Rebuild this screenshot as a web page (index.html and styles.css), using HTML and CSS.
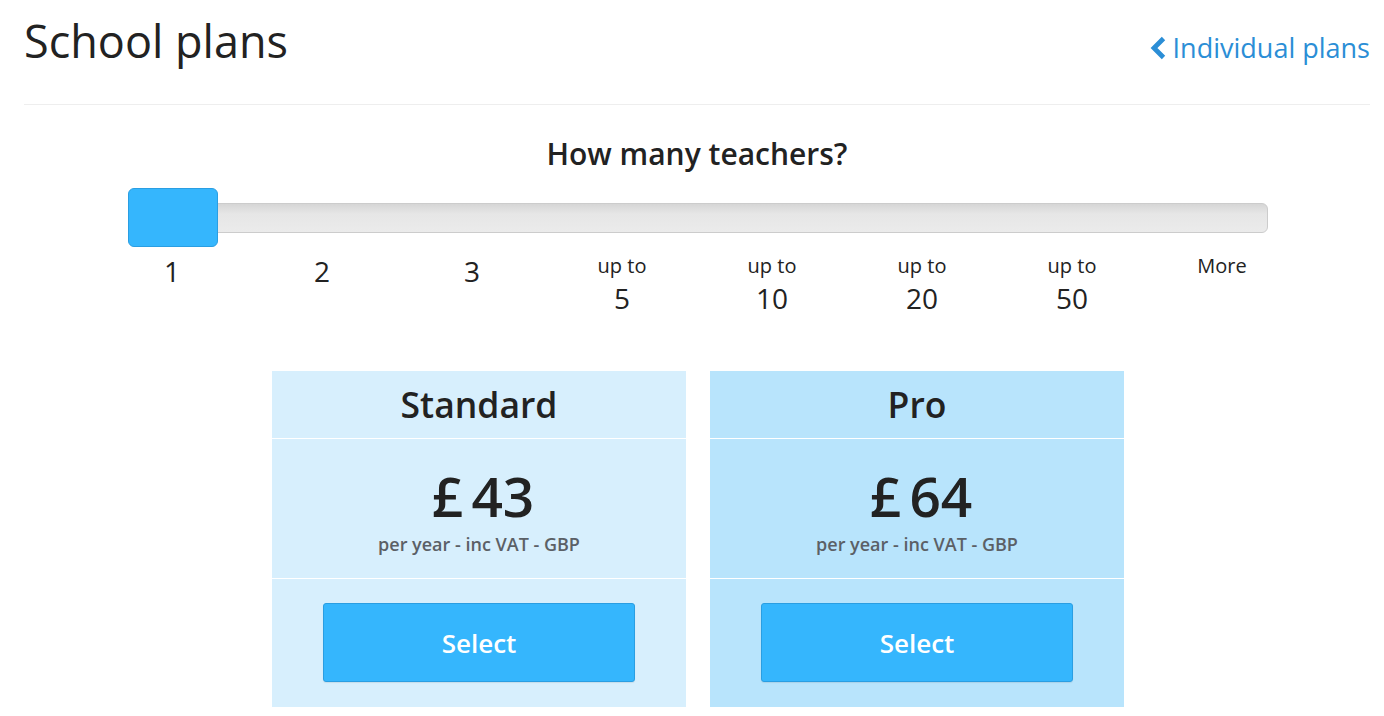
FILE: index.html
```html
<!DOCTYPE html>
<html lang="en">
<head>
<meta charset="utf-8">
<title>School plans</title>
<link rel="stylesheet" href="styles.css">
</head>
<body>
<div class="page">
  <header class="page-header">
    <h1 class="title">School plans</h1>
    <a class="back-link" href="#">
      <svg class="chev" viewBox="0 0 17 24" width="17" height="24" aria-hidden="true"><polyline points="14.5,2.5 5,12 14.5,21.5" fill="none" stroke="currentColor" stroke-width="4.8" stroke-linecap="butt" stroke-linejoin="miter"/></svg>
      <span>Individual plans</span>
    </a>
  </header>

  <section class="chooser">
    <h2 class="question">How many teachers?</h2>
    <div class="track">
      <div class="handle"></div>
    </div>
    <div class="ticks">
      <div class="tick single"><span class="num">1</span></div>
      <div class="tick single"><span class="num">2</span></div>
      <div class="tick single"><span class="num">3</span></div>
      <div class="tick"><span class="small">up to</span><span class="num">5</span></div>
      <div class="tick"><span class="small">up to</span><span class="num">10</span></div>
      <div class="tick"><span class="small">up to</span><span class="num">20</span></div>
      <div class="tick"><span class="small">up to</span><span class="num">50</span></div>
      <div class="tick"><span class="small">More</span></div>
    </div>
  </section>

  <section class="plans">
    <div class="plan standard">
      <div class="plan-name">Standard</div>
      <div class="plan-price">
        <div class="amount">£ 43</div>
        <div class="period">per year - inc VAT - GBP</div>
      </div>
      <div class="plan-action"><button class="select-btn">Select</button></div>
    </div>
    <div class="plan pro">
      <div class="plan-name">Pro</div>
      <div class="plan-price">
        <div class="amount">£ 64</div>
        <div class="period">per year - inc VAT - GBP</div>
      </div>
      <div class="plan-action"><button class="select-btn">Select</button></div>
    </div>
  </section>
</div>
</body>
</html>
```

FILE: styles.css
```css
* { box-sizing: border-box; }

html, body {
  margin: 0;
  padding: 0;
  background: #fff;
}

body {
  font-family: "Open Sans", "Noto Sans", "Liberation Sans", sans-serif;
  color: #222;
}

.page {
  padding: 0 14px 0 24px;
}

.page-header {
  display: flex;
  justify-content: space-between;
  align-items: baseline;
  height: 105px;
  padding-top: 16px;
  border-bottom: 1px solid #eeeeee;
}

.title {
  margin: 0;
  font-size: 45px;
  font-weight: 400;
  line-height: 1.1;
  color: #222;
}

.back-link {
  display: flex;
  align-items: baseline;
  gap: 7px;
  font-size: 27px;
  line-height: 1.1;
  color: #2b8ed6;
  text-decoration: none;
}

.chev {
  align-self: center;
}

.chooser {
  display: flex;
  flex-direction: column;
  align-items: center;
}

.question {
  margin: 31px 0 0;
  font-size: 30px;
  font-weight: 600;
  line-height: 36px;
  color: #222;
}

.track {
  position: relative;
  width: 1140px;
  height: 30px;
  margin-top: 31px;
  margin-left: 2px;
  border: 1px solid #cccccc;
  border-radius: 6px;
  background: linear-gradient(to bottom, #d6d6d6 0%, #e6e6e6 35%, #ebebeb 100%);
}

.handle {
  position: absolute;
  left: -1px;
  top: -16px;
  width: 90px;
  height: 59px;
  background: #35b6fd;
  border: 1px solid #2a9ee2;
  border-radius: 6px;
}

.ticks {
  display: flex;
  width: 1200px;
  margin-top: 18px;
}

.tick {
  width: 150px;
  display: flex;
  flex-direction: column;
  align-items: center;
  color: #222;
}

.tick .small {
  font-size: 20px;
  line-height: 30px;
}

.tick .num {
  font-size: 28px;
  line-height: 34px;
}

.tick.single .num {
  line-height: 40px;
}

.plans {
  display: flex;
  justify-content: center;
  gap: 24px;
  margin-top: 56px;
  padding-left: 2px;
}

.plan {
  width: 414px;
  display: flex;
  flex-direction: column;
}

.plan.standard { background: #d7effd; }
.plan.pro { background: #b8e4fc; }

.plan-name {
  height: 68px;
  display: flex;
  align-items: center;
  justify-content: center;
  font-size: 35.5px;
  font-weight: 600;
  border-bottom: 1px solid #ffffff;
  padding-bottom: 1px;
}

.plan-price {
  height: 140px;
  border-bottom: 1px solid #ffffff;
  text-align: center;
  padding-top: 25px;
}

.amount {
  font-size: 55px;
  font-weight: 600;
  line-height: 64px;
  word-spacing: -6px;
  padding-left: 8px;
  color: #222;
}

.period {
  font-size: 18px;
  font-weight: 600;
  line-height: 24px;
  color: #5b6066;
  margin-top: 4px;
}

.plan-action {
  height: 128px;
  display: flex;
  justify-content: center;
  padding-top: 24px;
}

.select-btn {
  width: 312px;
  height: 79px;
  background: #35b6fd;
  border: 1px solid #2a9ee2;
  border-radius: 3px;
  color: #fff;
  font-family: inherit;
  font-size: 26px;
  font-weight: 600;
  padding: 0;
  box-shadow: 0 1px 1px rgba(0, 0, 0, 0.08);
}
```
